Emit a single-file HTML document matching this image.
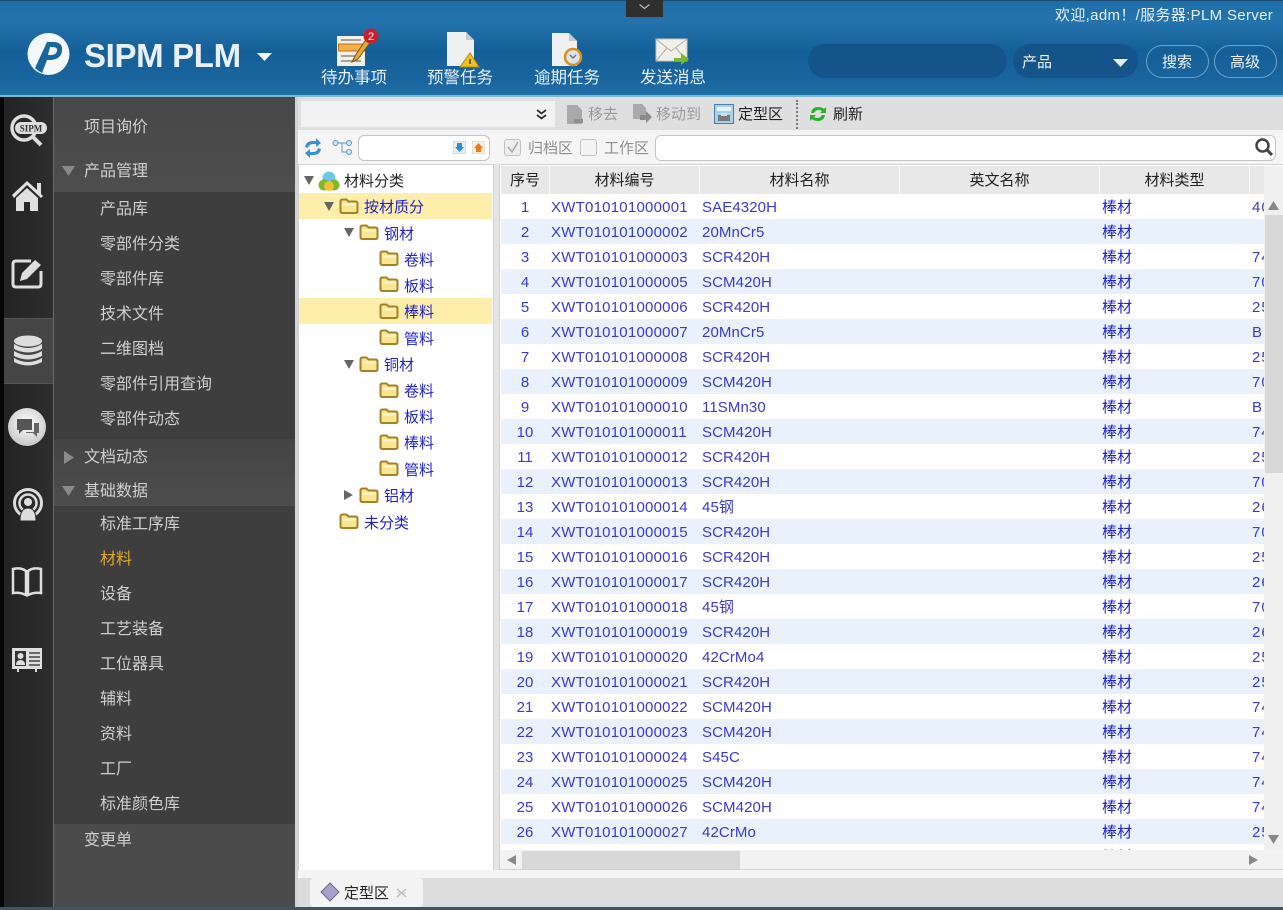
<!DOCTYPE html>
<html><head><meta charset="utf-8"><title>SIPM PLM</title>
<style>
html,body{margin:0;padding:0;width:1283px;height:910px;overflow:hidden;background:#e4e4e4}
body{position:relative;font-family:"Liberation Sans","Noto Sans CJK SC",sans-serif}
div,span,svg{position:absolute;box-sizing:border-box}
.t{white-space:nowrap}
.hd{top:0;left:0;width:1283px;height:97px;background:linear-gradient(#1e6fa9 0,#2473ac 22px,#155f98 50px,#1a659e 80px,#2170a8 94px);border-top:1px solid #1b4a70}
.nav{color:#e6eff5;font-size:16.5px;top:68px;line-height:20px}
.m{color:#cfcfcf;font-size:16px;letter-spacing:0;line-height:20px;white-space:nowrap;margin-top:1px}
.g{left:54px;width:241px;background:#4b4b4b}
.tr{color:#2222cc;font-size:15px;line-height:20px;white-space:nowrap;margin-top:1px}
.r{left:501px;width:764px;height:25px;font-size:15px;color:#3a3acb;line-height:25px;white-space:nowrap;overflow:hidden}
.e{background:#e8f1fc}
.r span{top:1px}
.a{left:0;width:48px;text-align:center}
.b{left:50px;letter-spacing:.23px}
.c{left:201px;letter-spacing:.1px}
.d{left:601px;font-size:15px;color:#2222cc}
.f{left:751px;width:14px;overflow:hidden;letter-spacing:1px}
.th{top:166px;height:28px;background:#e8e8e8;border-right:1px solid #fafafa;text-align:center;font-size:15px;line-height:30px;color:#222}
.gr{color:#999;font-size:15px;line-height:20px;white-space:nowrap}
</style></head><body>
<svg width="0" height="0" style="left:0;top:0"><defs>
<symbol id="fo" viewBox="0 0 20 16"><path d="M1.500 13V3.500Q1.500 1.500 3.500 1.500H7.500L9.500 3.500H16.500Q18.500 3.500 18.500 5.500V13Q18.500 15 16.500 15H3.500Q1.500 15 1.500 13Z" fill="#f9e690" stroke="#a3812a" stroke-width="2"/><path d="M3.500 6.500H16.500" stroke="#fff6cc" stroke-width="2"/></symbol>
</defs></svg>

<div class="hd"></div>
<div style="left:0;top:95px;width:1283px;height:2px;background:#7db7cf"></div>
<div style="left:626px;top:0;width:37px;height:17px;background:#2f2f2f"></div>
<svg style="left:638px;top:3px" width="13" height="8"><path d="M1.500 1.500L6.500 5.500L11.500 1.500" fill="none" stroke="#bbb" stroke-width="1.200"/></svg>

<!-- logo -->
<svg style="left:27px;top:33px" width="44" height="44" viewBox="0 0 44 44"><circle cx="21.500" cy="21" r="21" fill="#f4f8fb"/><path d="M20 9H28Q36 10 35 18Q34 26 24 27L20 27L15 40Q11 38 8 35Z" fill="#1865a0"/><path d="M23 14H27Q31 15 30 18Q29 22 24 22H21Z" fill="#f4f8fb"/></svg>
<div class="t" style="left:84px;top:36px;font-size:33px;font-weight:bold;line-height:40px;color:#e8f0f5;letter-spacing:-.35px">SIPM PLM</div>
<svg style="left:257px;top:53px" width="15" height="9"><path d="M0 0H15L7.500 8Z" fill="#f0f4f7"/></svg>

<!-- nav icons -->
<svg style="left:336px;top:28px" width="46" height="40" viewBox="0 0 46 40"><rect x="1" y="8" width="28" height="30" fill="#f3efe3"/><path d="M5 12H25M5 28H25M5 33H25" stroke="#888" stroke-width="1.500"/><rect x="2.500" y="16" width="26" height="7" fill="#f2b04d" stroke="#c96f14"/><path d="M16 34L19 28L31 10L35 13L22 31Z" fill="#e9a93a" stroke="#7a5a18"/><circle cx="35" cy="8" r="7.500" fill="#c8202f"/><text x="35" y="12" font-size="11" fill="#fff" text-anchor="middle" font-family="Liberation Sans">2</text></svg>
<svg style="left:445px;top:31px" width="38" height="37" viewBox="0 0 38 37"><path d="M2 1H21L29 9V35H2Z" fill="#eef0f2"/><path d="M21 1V9H29Z" fill="#c6cbd0"/><path d="M25 22L34 36H15Z" fill="#f0c020" stroke="#b68a12"/><rect x="24" y="28" width="2" height="5" fill="#7a5d10"/></svg>
<svg style="left:551px;top:32px" width="36" height="38" viewBox="0 0 36 38"><path d="M1 1H18L26 9V34H1Z" fill="#eef0f2"/><path d="M18 1V9H26Z" fill="#c6cbd0"/><circle cx="22" cy="25" r="8" fill="#dde2ea" stroke="#d8901f" stroke-width="2.500"/><path d="M19 23L22 26L25 23" stroke="#777" stroke-width="1.500" fill="none"/></svg>
<svg style="left:654px;top:38px" width="36" height="28" viewBox="0 0 36 28"><rect x="2" y="1" width="31" height="22" fill="#f1efe9" stroke="#c8c4ba"/><path d="M2 1L17 13L33 1M2 23L13 10M33 23L22 10" stroke="#b5b0a6" fill="none"/><path d="M20 20H27V15L35 21L27 27V24H20Z" fill="#78b82c"/></svg>

<div class="nav t" style="left:321px">待办事项</div>
<div class="nav t" style="left:427px">预警任务</div>
<div class="nav t" style="left:534px">逾期任务</div>
<div class="nav t" style="left:640px">发送消息</div>

<div class="t" style="left:1055px;top:7px;font-size:15px;line-height:18px;color:#e8f0f5;letter-spacing:.33px">欢迎,adm！/服务器:PLM Server</div>

<!-- search -->
<div style="left:808px;top:44px;width:199px;height:34px;border-radius:17px;background:#145488"></div>
<div style="left:1013px;top:44px;width:125px;height:34px;border-radius:17px;background:#145488"></div>
<div class="t" style="left:1022px;top:53px;font-size:15px;line-height:20px;color:#eef4f8">产品</div>
<svg style="left:1113px;top:59px" width="15" height="8"><path d="M0 0H15L7.500 8Z" fill="#e8eef3"/></svg>
<div style="left:1146px;top:45px;width:63px;height:33px;border-radius:17px;border:1.500px solid #6ea3c8"></div>
<div class="t" style="left:1162px;top:53px;font-size:15px;line-height:20px;color:#eef4f8">搜索</div>
<div style="left:1214px;top:45px;width:63px;height:33px;border-radius:17px;border:1.500px solid #6ea3c8"></div>
<div class="t" style="left:1230px;top:53px;font-size:15px;line-height:20px;color:#eef4f8">高级</div>

<!-- sidebar -->
<div style="left:0;top:97px;width:4px;height:813px;background:#050505"></div>
<div style="left:4px;top:97px;width:49px;height:813px;background:linear-gradient(90deg,#232323,#2e2e2e)"></div>
<div style="left:53px;top:97px;width:1px;height:813px;background:#6a6a6a"></div>
<div style="left:54px;top:97px;width:241px;height:813px;background:#3e3e3e"></div>
<div style="left:295px;top:97px;width:3px;height:813px;background:#d4d4d4"></div>
<div class="g" style="top:97px;height:95px;background:linear-gradient(#474747,#4e4e4e)"></div>
<div class="g" style="top:439px;height:67px;background:linear-gradient(#444,#4d4d4d)"></div>
<div class="g" style="top:824px;height:86px"></div>
<div style="left:4px;top:318px;width:49px;height:66px;background:#454545;border-top:1px solid #555;border-bottom:1px solid #555"></div>

<svg style="left:9px;top:113px" width="40" height="36" viewBox="0 0 40 36"><circle cx="15" cy="15" r="12" fill="none" stroke="#ddd" stroke-width="3.500"/><path d="M24 24L32 32" stroke="#ddd" stroke-width="4"/><rect x="6" y="9" width="32" height="12" rx="6" fill="#ddd"/><text x="22" y="18.500" font-size="9" font-weight="bold" text-anchor="middle" fill="#333" font-family="Liberation Serif">SIPM</text></svg>
<svg style="left:10px;top:178px" width="34" height="34" viewBox="0 0 34 34"><path d="M2 17L17 3L27 12V5H31V16L33 18L31 20L17 7L4 20Z" fill="#e0e0e0"/><path d="M6 20L17 10L28 20V33H20V24H14V33H6Z" fill="#e0e0e0"/></svg>
<svg style="left:11px;top:256px" width="34" height="34" viewBox="0 0 34 34"><path d="M20 5H5Q2 5 2 8V28Q2 31 5 31H27Q30 31 30 28V15" fill="none" stroke="#dedede" stroke-width="3"/><path d="M9 25L11 17L24 4L30 9L16 23Z" fill="#dedede"/></svg>
<svg style="left:12px;top:335px" width="32" height="33" viewBox="0 0 32 33"><g fill="#ddd"><ellipse cx="16" cy="6" rx="14" ry="5.500"/><path d="M2 9Q16 17 30 9V14Q16 21 2 14Z"/><path d="M2 16Q16 24 30 16V21Q16 28 2 21Z"/><path d="M2 23Q16 31 30 23V27Q16 34 2 27Z"/></g></svg>
<svg style="left:7px;top:407px" width="40" height="40" viewBox="0 0 40 40"><defs><radialGradient id="bb" cx=".5" cy=".4" r=".6"><stop offset="0" stop-color="#fff"/><stop offset="1" stop-color="#c6c6c6"/></radialGradient></defs><circle cx="20" cy="20" r="19" fill="url(#bb)"/><path d="M10 12H25V23H16L12 27V23H10Z" fill="#555"/><path d="M27 16H32V26H30V30L26 26H19V25H27Z" fill="#666"/></svg>
<svg style="left:11px;top:488px" width="34" height="34" viewBox="0 0 34 34"><circle cx="17" cy="15" r="13.500" fill="none" stroke="#ddd" stroke-width="3"/><circle cx="17" cy="15" r="8.500" fill="none" stroke="#ddd" stroke-width="2.500"/><circle cx="17" cy="14" r="4" fill="#ddd"/><path d="M9 33Q9 20 17 20Q25 20 25 33Z" fill="#ddd" stroke="#2a2a2a"/></svg>
<svg style="left:11px;top:566px" width="32" height="32" viewBox="0 0 32 32"><path d="M2 3Q10 1 15 5V29Q9 26 2 27Z M30 3Q22 1 17 5V29Q23 26 30 27Z" fill="none" stroke="#dedede" stroke-width="2.500"/></svg>
<svg style="left:11px;top:647px" width="32" height="26" viewBox="0 0 32 26"><rect x="1" y="1" width="30" height="21" fill="#dedede"/><rect x="4" y="4" width="11" height="15" fill="#333"/><circle cx="9.500" cy="9" r="3" fill="#ddd"/><path d="M5 18Q5 13 9.500 13Q14 13 14 18Z" fill="#ddd"/><path d="M18 6H29M18 10H29M18 14H29M18 18H29" stroke="#444" stroke-width="1.500"/><path d="M7 22V25M25 22V25" stroke="#ddd" stroke-width="2"/></svg>

<div class="m" style="left:84px;top:117px">项目询价</div>
<svg style="left:62px;top:166px" width="13" height="10"><path d="M0 0H13L6.500 10Z" fill="#8a8a8a"/></svg>
<div class="m" style="left:84px;top:161px">产品管理</div>
<div class="m" style="left:100px;top:199px">产品库</div>
<div class="m" style="left:100px;top:234px">零部件分类</div>
<div class="m" style="left:100px;top:269px">零部件库</div>
<div class="m" style="left:100px;top:304px">技术文件</div>
<div class="m" style="left:100px;top:339px">二维图档</div>
<div class="m" style="left:100px;top:374px">零部件引用查询</div>
<div class="m" style="left:100px;top:409px">零部件动态</div>
<svg style="left:64px;top:451px" width="10" height="13"><path d="M0 0V13L10 6.500Z" fill="#8a8a8a"/></svg>
<div class="m" style="left:84px;top:447px">文档动态</div>
<svg style="left:62px;top:486px" width="13" height="10"><path d="M0 0H13L6.500 10Z" fill="#8a8a8a"/></svg>
<div class="m" style="left:84px;top:481px">基础数据</div>
<div class="m" style="left:100px;top:514px">标准工序库</div>
<div class="m" style="left:100px;top:549px;color:#e0a92e">材料</div>
<div class="m" style="left:100px;top:584px">设备</div>
<div class="m" style="left:100px;top:619px">工艺装备</div>
<div class="m" style="left:100px;top:654px">工位器具</div>
<div class="m" style="left:100px;top:689px">辅料</div>
<div class="m" style="left:100px;top:724px">资料</div>
<div class="m" style="left:100px;top:759px">工厂</div>
<div class="m" style="left:100px;top:794px">标准颜色库</div>
<div class="m" style="left:84px;top:830px">变更单</div>

<!-- toolbar -->
<div style="left:298px;top:97px;width:985px;height:33px;background:#dfdfdf"></div>
<div style="left:298px;top:130px;width:985px;height:5px;background:#f3f3f3"></div>
<div style="left:301px;top:101px;width:254px;height:26px;background:#f2f2f2"></div>
<svg style="left:535px;top:108px" width="13" height="13"><path d="M2 2L6.500 5.500L11 2M2 7L6.500 10.500L11 7" fill="none" stroke="#333" stroke-width="1.800"/></svg>
<svg style="left:566px;top:104px" width="18" height="21"><path d="M1 1H11L16 6V20H1Z" fill="#a9a9a9"/><rect x="8" y="15" width="9" height="4" fill="#8f8f8f"/></svg>
<div class="gr" style="left:588px;top:105px">移去</div>
<svg style="left:632px;top:103px" width="20" height="21"><path d="M1 1H10L14 5V16H1Z" fill="#a9a9a9"/><path d="M8 12H14V8L20 14L14 20V17H8Z" fill="#8b8b8b"/></svg>
<div class="gr" style="left:656px;top:105px">移动到</div>
<svg style="left:714px;top:104px" width="20" height="20"><rect x=".5" y=".5" width="19" height="19" fill="#a9d2ea" stroke="#4a80aa"/><rect x="3" y="3" width="14" height="4" fill="#e7f3fa"/><rect x="4" y="11" width="12" height="6" fill="#777"/><rect x="7" y="9" width="6" height="3" fill="#ddd"/></svg>
<div class="t" style="left:738px;top:105px;font-size:15px;line-height:20px;color:#222">定型区</div>
<div style="left:796px;top:100px;width:0;height:29px;border-left:2px dotted #777"></div>
<svg style="left:809px;top:105px" width="18" height="18" viewBox="0 0 18 18"><path d="M2 8Q3 2 9 2Q13 2 15 4L17 2V8H11L13 6Q8 3 5 8Z M16 10Q15 16 9 16Q5 16 3 14L1 16V10H7L5 12Q10 15 13 10Z" fill="#2eae2e"/></svg>
<div class="t" style="left:833px;top:105px;font-size:15px;line-height:20px;color:#222">刷新</div>

<!-- filter row -->
<div style="left:298px;top:135px;width:985px;height:29px;background:#f5f5f5"></div>
<svg style="left:304px;top:138px" width="18" height="20" viewBox="0 0 18 20"><path d="M1 9Q2 3 9 3H12V0L17 5L12 9V6H9Q5 6 4 10Z M17 11Q16 17 9 17H6V20L1 15L6 11V14H9Q13 14 14 10Z" fill="#3d8fd0"/></svg>
<svg style="left:332px;top:139px" width="21" height="18"><circle cx="3.500" cy="4" r="2.500" fill="#cfe3f2" stroke="#5a96c5"/><circle cx="17" cy="4" r="2.500" fill="#cfe3f2" stroke="#5a96c5"/><circle cx="17" cy="13" r="2.500" fill="#cfe3f2" stroke="#5a96c5"/><path d="M6 4H14M10 4V13H14" stroke="#5a96c5" fill="none"/></svg>
<div style="left:358px;top:135px;width:132px;height:26px;background:#fff;border:1px solid #c4c4c4;border-radius:6px"></div>
<svg style="left:453px;top:141px" width="13" height="13"><rect width="13" height="13" fill="#e4eff8" stroke="#bcd"/><path d="M4 2H9V6H11L6.500 11L2 6H4Z" fill="#2b8fd8"/></svg>
<svg style="left:472px;top:141px" width="13" height="13"><rect width="13" height="13" fill="#faeee0" stroke="#dcb"/><path d="M4 11H9V7H11L6.500 2L2 7H4Z" fill="#ec7a12"/></svg>
<div style="left:504px;top:139px;width:17px;height:17px;background:#ededed;border:1px solid #c2c2c2;border-radius:3px"></div>
<svg style="left:506px;top:141px" width="14" height="13"><path d="M2 6L6 11L12 1" stroke="#a8a8a8" stroke-width="1.500" fill="none"/></svg>
<div class="gr" style="left:528px;top:139px;color:#8f8f8f">归档区</div>
<div style="left:580px;top:139px;width:17px;height:17px;background:#f4f4f4;border:1px solid #c2c2c2;border-radius:3px"></div>
<div class="gr" style="left:604px;top:139px;color:#8f8f8f">工作区</div>
<div style="left:655px;top:135px;width:621px;height:26px;background:#fff;border:1px solid #c4c4c4;border-radius:6px"></div>
<svg style="left:1254px;top:137px" width="20" height="20"><circle cx="8.500" cy="8.500" r="6" fill="none" stroke="#444" stroke-width="2.500"/><path d="M13 13L18 18" stroke="#444" stroke-width="3"/></svg>

<!-- tree -->
<div style="left:298px;top:164px;width:196px;height:713px;background:#fff;border:1px solid #d2d2d2"></div>
<div style="left:299px;top:193px;width:193px;height:26px;background:#fdeeab"></div>
<div style="left:299px;top:298px;width:193px;height:26px;background:#fdeeab"></div>
<svg style="left:304px;top:176px" width="10" height="9"><path d="M0 0H10L5 9Z" fill="#666"/></svg>
<svg style="left:318px;top:170px" width="22" height="22" viewBox="0 0 22 22"><circle cx="11" cy="8" r="6.500" fill="#6cc6ec"/><circle cx="6" cy="15" r="5.500" fill="#79b92c"/><circle cx="16" cy="15" r="5.500" fill="#79b92c"/><circle cx="11" cy="16" r="5" fill="#f0c030"/></svg>
<div class="t" style="left:344px;top:172px;font-size:15px;line-height:20px;color:#222">材料分类</div>

<svg style="left:324px;top:202px" width="10" height="9"><path d="M0 0H10L5 9Z" fill="#666"/></svg>
<svg style="left:339px;top:198px" width="20" height="16"><use href="#fo"/></svg>
<div class="tr" style="left:364px;top:197px">按材质分</div>
<svg style="left:344px;top:228px" width="10" height="9"><path d="M0 0H10L5 9Z" fill="#666"/></svg>
<svg style="left:359px;top:224px" width="20" height="16"><use href="#fo"/></svg>
<div class="tr" style="left:384px;top:224px">钢材</div>
<svg style="left:379px;top:250px" width="20" height="16"><use href="#fo"/></svg>
<div class="tr" style="left:404px;top:250px">卷料</div>
<svg style="left:379px;top:276px" width="20" height="16"><use href="#fo"/></svg>
<div class="tr" style="left:404px;top:276px">板料</div>
<svg style="left:379px;top:303px" width="20" height="16"><use href="#fo"/></svg>
<div class="tr" style="left:404px;top:302px">棒料</div>
<svg style="left:379px;top:329px" width="20" height="16"><use href="#fo"/></svg>
<div class="tr" style="left:404px;top:329px">管料</div>
<svg style="left:344px;top:360px" width="10" height="9"><path d="M0 0H10L5 9Z" fill="#666"/></svg>
<svg style="left:359px;top:356px" width="20" height="16"><use href="#fo"/></svg>
<div class="tr" style="left:384px;top:355px">铜材</div>
<svg style="left:379px;top:382px" width="20" height="16"><use href="#fo"/></svg>
<div class="tr" style="left:404px;top:381px">卷料</div>
<svg style="left:379px;top:408px" width="20" height="16"><use href="#fo"/></svg>
<div class="tr" style="left:404px;top:407px">板料</div>
<svg style="left:379px;top:434px" width="20" height="16"><use href="#fo"/></svg>
<div class="tr" style="left:404px;top:433px">棒料</div>
<svg style="left:379px;top:460px" width="20" height="16"><use href="#fo"/></svg>
<div class="tr" style="left:404px;top:460px">管料</div>
<svg style="left:344px;top:490px" width="9" height="10"><path d="M0 0V10L9 5Z" fill="#666"/></svg>
<svg style="left:359px;top:487px" width="20" height="16"><use href="#fo"/></svg>
<div class="tr" style="left:384px;top:486px">铝材</div>
<svg style="left:339px;top:513px" width="20" height="16"><use href="#fo"/></svg>
<div class="tr" style="left:364px;top:513px">未分类</div>

<!-- grid -->
<div style="left:499px;top:164px;width:784px;height:706px;background:#fff;border:1px solid #d2d2d2;border-right:0"></div>
<div class="th" style="left:501px;width:49px">序号</div>
<div class="th" style="left:550px;width:150px">材料编号</div>
<div class="th" style="left:700px;width:200px">材料名称</div>
<div class="th" style="left:900px;width:200px">英文名称</div>
<div class="th" style="left:1100px;width:150px">材料类型</div>
<div class="th" style="left:1250px;width:15px;border-right:0"></div>

<div class="r" style="top:194px"><span class="a">1</span><span class="b">XWT010101000001</span><span class="c">SAE4320H</span><span class="d">棒材</span><span class="f">40</span></div>
<div class="r e" style="top:219px"><span class="a">2</span><span class="b">XWT010101000002</span><span class="c">20MnCr5</span><span class="d">棒材</span></div>
<div class="r" style="top:244px"><span class="a">3</span><span class="b">XWT010101000003</span><span class="c">SCR420H</span><span class="d">棒材</span><span class="f">74</span></div>
<div class="r e" style="top:269px"><span class="a">4</span><span class="b">XWT010101000005</span><span class="c">SCM420H</span><span class="d">棒材</span><span class="f">70</span></div>
<div class="r" style="top:294px"><span class="a">5</span><span class="b">XWT010101000006</span><span class="c">SCR420H</span><span class="d">棒材</span><span class="f">25</span></div>
<div class="r e" style="top:319px"><span class="a">6</span><span class="b">XWT010101000007</span><span class="c">20MnCr5</span><span class="d">棒材</span><span class="f">BI</span></div>
<div class="r" style="top:344px"><span class="a">7</span><span class="b">XWT010101000008</span><span class="c">SCR420H</span><span class="d">棒材</span><span class="f">25</span></div>
<div class="r e" style="top:369px"><span class="a">8</span><span class="b">XWT010101000009</span><span class="c">SCM420H</span><span class="d">棒材</span><span class="f">70</span></div>
<div class="r" style="top:394px"><span class="a">9</span><span class="b">XWT010101000010</span><span class="c">11SMn30</span><span class="d">棒材</span><span class="f">BI</span></div>
<div class="r e" style="top:419px"><span class="a">10</span><span class="b">XWT010101000011</span><span class="c">SCM420H</span><span class="d">棒材</span><span class="f">74</span></div>
<div class="r" style="top:444px"><span class="a">11</span><span class="b">XWT010101000012</span><span class="c">SCR420H</span><span class="d">棒材</span><span class="f">25</span></div>
<div class="r e" style="top:469px"><span class="a">12</span><span class="b">XWT010101000013</span><span class="c">SCR420H</span><span class="d">棒材</span><span class="f">70</span></div>
<div class="r" style="top:494px"><span class="a">13</span><span class="b">XWT010101000014</span><span class="c">45钢</span><span class="d">棒材</span><span class="f">26</span></div>
<div class="r e" style="top:519px"><span class="a">14</span><span class="b">XWT010101000015</span><span class="c">SCR420H</span><span class="d">棒材</span><span class="f">70</span></div>
<div class="r" style="top:544px"><span class="a">15</span><span class="b">XWT010101000016</span><span class="c">SCR420H</span><span class="d">棒材</span><span class="f">25</span></div>
<div class="r e" style="top:569px"><span class="a">16</span><span class="b">XWT010101000017</span><span class="c">SCR420H</span><span class="d">棒材</span><span class="f">26</span></div>
<div class="r" style="top:594px"><span class="a">17</span><span class="b">XWT010101000018</span><span class="c">45钢</span><span class="d">棒材</span><span class="f">70</span></div>
<div class="r e" style="top:619px"><span class="a">18</span><span class="b">XWT010101000019</span><span class="c">SCR420H</span><span class="d">棒材</span><span class="f">26</span></div>
<div class="r" style="top:644px"><span class="a">19</span><span class="b">XWT010101000020</span><span class="c">42CrMo4</span><span class="d">棒材</span><span class="f">25</span></div>
<div class="r e" style="top:669px"><span class="a">20</span><span class="b">XWT010101000021</span><span class="c">SCR420H</span><span class="d">棒材</span><span class="f">25</span></div>
<div class="r" style="top:694px"><span class="a">21</span><span class="b">XWT010101000022</span><span class="c">SCM420H</span><span class="d">棒材</span><span class="f">74</span></div>
<div class="r e" style="top:719px"><span class="a">22</span><span class="b">XWT010101000023</span><span class="c">SCM420H</span><span class="d">棒材</span><span class="f">74</span></div>
<div class="r" style="top:744px"><span class="a">23</span><span class="b">XWT010101000024</span><span class="c">S45C</span><span class="d">棒材</span><span class="f">74</span></div>
<div class="r e" style="top:769px"><span class="a">24</span><span class="b">XWT010101000025</span><span class="c">SCM420H</span><span class="d">棒材</span><span class="f">74</span></div>
<div class="r" style="top:794px"><span class="a">25</span><span class="b">XWT010101000026</span><span class="c">SCM420H</span><span class="d">棒材</span><span class="f">74</span></div>
<div class="r e" style="top:819px"><span class="a">26</span><span class="b">XWT010101000027</span><span class="c">42CrMo</span><span class="d">棒材</span><span class="f">25</span></div>
<div class="r" style="top:844px;height:6px"><span class="d">棒材</span></div>

<!-- scrollbars -->
<div style="left:1264px;top:166px;width:19px;height:684px;background:#f0f0f0"></div>
<div style="left:1265px;top:215px;width:18px;height:258px;background:#d8d8d8"></div>
<svg style="left:1268px;top:201px" width="11" height="9"><path d="M5.500 0L11 9H0Z" fill="#888"/></svg>
<svg style="left:1268px;top:835px" width="11" height="9"><path d="M5.500 9L11 0H0Z" fill="#888"/></svg>
<div style="left:500px;top:850px;width:783px;height:19px;background:#f2f2f2"></div>
<div style="left:522px;top:851px;width:218px;height:18px;background:#d8d8d8"></div>
<svg style="left:507px;top:855px" width="9" height="10"><path d="M0 5L9 0V10Z" fill="#888"/></svg>
<svg style="left:1249px;top:855px" width="9" height="10"><path d="M9 5L0 0V10Z" fill="#888"/></svg>

<!-- tab bar -->
<div style="left:298px;top:870px;width:985px;height:8px;background:#f4f4f4"></div>
<div style="left:298px;top:878px;width:985px;height:29px;background:#dcdcdc"></div>
<div style="left:310px;top:878px;width:113px;height:29px;background:#f3f3f3;border-radius:4px"></div>
<svg style="left:320px;top:882px" width="20" height="20"><path d="M10 1L19 10L10 19L1 10Z" fill="#a99fcd" stroke="#6d6a8a"/></svg>
<div class="t" style="left:344px;top:884px;font-size:15px;line-height:20px;color:#222">定型区</div>
<svg style="left:396px;top:888px" width="11" height="10"><path d="M1 1L10 9M10 1L1 9" stroke="#bbb" stroke-width="1.500"/><path d="M1 5H10" stroke="#ccc"/></svg>
<div style="left:0;top:907px;width:1283px;height:3px;background:#3d5568"></div>
</body></html>
